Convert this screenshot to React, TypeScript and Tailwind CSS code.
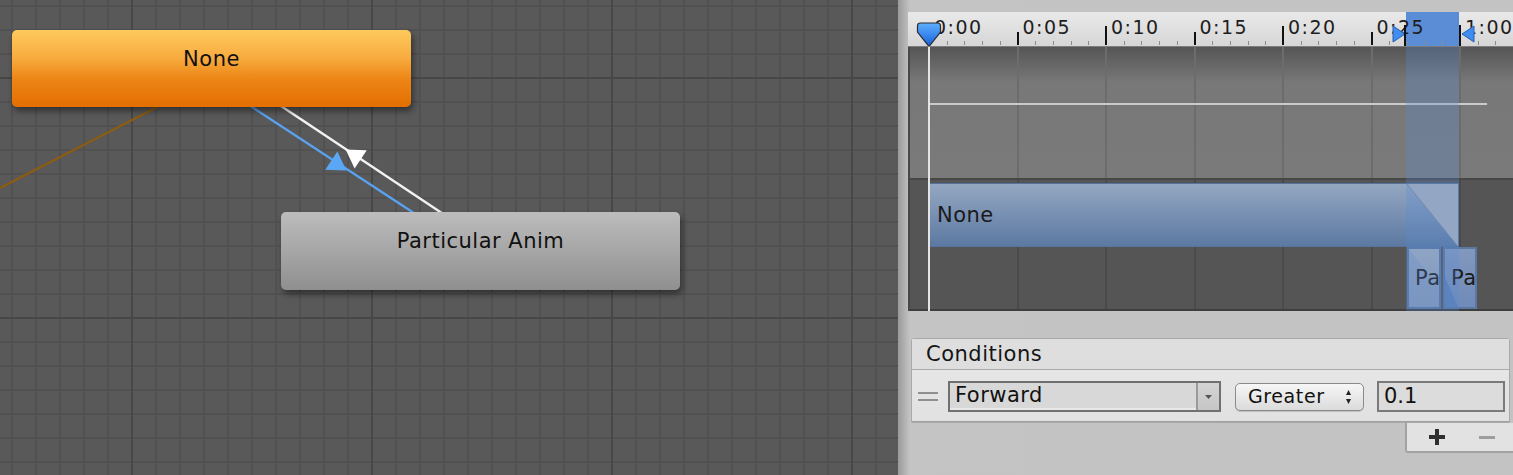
import React from 'react';

const FONT = "font-['DejaVu_Sans',sans-serif]";

// timeline x (relative to the timeline block, which starts at page x 908)
const tx = (t: number) => 21 + 88.5 * t;

const labels = ['0:00', '0:05', '0:10', '0:15', '0:20', '0:25', '1:00'];

const Graph: React.FC = () => (
  <div className="relative w-[898px] h-full shrink-0 overflow-hidden bg-[#595959] [background-image:linear-gradient(to_right,#474747_2px,transparent_2px),linear-gradient(to_bottom,#474747_2px,transparent_2px),linear-gradient(to_right,#515151_2px,transparent_2px),linear-gradient(to_bottom,#515151_2px,transparent_2px)] [background-size:240px_240px,240px_240px,24px_24px,24px_24px] [background-position:131px_77px,131px_77px,11px_5px,11px_5px]">
    {/* transitions */}
    <svg className="absolute inset-0 pointer-events-none" width="898" height="475">
      <line x1="-5" y1="190.6" x2="200" y2="85" stroke="#8c5c12" strokeWidth="2.2" />
      <line x1="230" y1="92.6" x2="420" y2="217" stroke="#5aa2f0" strokeWidth="2.2" />
      <line x1="260" y1="92" x2="450" y2="218.4" stroke="#f2f2f2" strokeWidth="2.4" />
      <polygon points="10,0 -8,-11 -8,11" fill="#5aa8f5" transform="translate(338 165) rotate(33.5)" />
      <polygon points="10,0 -8,-11 -8,11" fill="#ffffff" transform="translate(354 155) rotate(213.5)" />
    </svg>

    {/* state nodes */}
    <div className="absolute left-[12px] top-[30px] w-[399px] h-[77px] rounded-[5px] bg-[linear-gradient(to_bottom,#fec95d,#f8ad40_35%,#ec8414_65%,#e36f00)] shadow-[2px_4px_6px_rgba(0,0,0,0.45)] flex justify-center pt-[17px]">
      <span className={`${FONT} text-[21px] leading-[24px] tracking-[0.5px] text-[#111]`}>None</span>
    </div>
    <div className="absolute left-[281px] top-[212px] w-[399px] h-[78px] rounded-[5px] bg-[linear-gradient(to_bottom,#bcbcbc,#a6a6a6_50%,#8f8f8f)] shadow-[2px_4px_6px_rgba(0,0,0,0.45)] flex justify-center pt-[17px]">
      <span className={`${FONT} text-[21px] leading-[24px] tracking-[0.5px] text-[#111]`}>Particular Anim</span>
    </div>
  </div>
);

const Ruler: React.FC = () => {
  const minors = [];
  for (let i = 0; i < 34; i++) {
    if (i % 5 === 0) continue;
    minors.push(21 + 17.7 * i);
  }
  return (
    <div className="relative h-[35px] overflow-hidden bg-[linear-gradient(to_bottom,#e9e9e9,#d6d6d6)] border-b border-[#7d7d7d]">
      {/* selected transition range */}
      <div className="absolute left-[498px] top-0 w-[53px] h-full bg-[#5b8dd6]" />
      {minors.map((x, i) => (
        <div key={i} className="absolute bottom-[1px] w-px h-[4px] bg-[#8c8c8c]" style={{ left: x }} />
      ))}
      {labels.map((l, t) => (
        <React.Fragment key={l}>
          <div
            className={`absolute bottom-[1px] w-[2px] bg-[#111] ${t % 2 === 1 ? 'h-[13px]' : 'h-[19px]'}`}
            style={{ left: tx(t) - 1 }}
          />
          <span
            className={`${FONT} absolute top-[6px] text-[19px] leading-[19px] tracking-[1.5px] text-[#1e1e1e]`}
            style={{ left: tx(t) + 5 }}
          >
            {l}
          </span>
        </React.Fragment>
      ))}
      {/* range markers */}
      <svg className="absolute left-[484px] top-[13px]" width="16" height="22">
        <polygon points="1,1 13,9 1,17" fill="#3f8df0" stroke="#2a5fae" strokeWidth="1" />
        <rect x="12" y="0" width="2" height="21" fill="#111" />
      </svg>
      <svg className="absolute left-[551px] top-[13px]" width="17" height="22">
        <rect x="0" y="0" width="2" height="21" fill="#111" />
        <polygon points="15,1 3,9 15,17" fill="#3f8df0" stroke="#2a5fae" strokeWidth="1" />
      </svg>
      {/* playhead */}
      <svg className="absolute left-[8px] top-[10px]" width="26" height="26">
        <defs>
          <linearGradient id="ph" x1="0" y1="0" x2="0" y2="1">
            <stop offset="0" stopColor="#5fb0ff" />
            <stop offset="1" stopColor="#145fdc" />
          </linearGradient>
        </defs>
        <path d="M1.5 4 Q1.5 1 4.5 1 L21.5 1 Q24.5 1 24.5 4 L24.5 10 L13 24.5 L1.5 10 Z" fill="url(#ph)" stroke="#2b2b2b" strokeWidth="1.2" />
      </svg>
    </div>
  );
};

const Tracks: React.FC = () => (
  <div className="relative h-[264px] flex flex-col border-l-2 border-[#474747] overflow-hidden">
    {/* curve section */}
    <div className="relative h-[131px] bg-[linear-gradient(to_bottom,#555555,#787878_35px,#7a7a7a)]">
      {[1, 2, 3, 4, 5, 6].map((t) => (
        <div key={t} className="absolute top-0 bottom-0 w-[2px] bg-[#6c6c6c]" style={{ left: tx(t) - 3 }} />
      ))}
      <div className="absolute left-[18px] w-[559px] top-[56px] h-[2px] bg-[#cacaca]" />
    </div>
    <div className="h-[2px] bg-[#474747]" />
    {/* states section */}
    <div className="relative flex-1 bg-[#555555] border-b-2 border-[#3e3e3e]">
      {[1, 2, 3, 4, 5, 6].map((t) => (
        <div key={t} className="absolute top-0 bottom-0 w-[2px] bg-[#4a4a4a]" style={{ left: tx(t) - 3 }} />
      ))}
      <div className="absolute left-[18px] top-[3px] w-[531px] h-[64px] border border-[#55739d] bg-[linear-gradient(to_bottom,#94a7c1,#7890b2_50%,#5c79a1)] flex items-center pl-[8px] overflow-hidden">
        <span className={`${FONT} text-[21px] leading-[24px] tracking-[0.5px] text-[#1a1a1a]`}>None</span>
        <svg className="absolute left-[478px] top-0" width="53" height="64">
          <polygon points="0,0 53,0 53,64 49,60" fill="#a9b1bd" />
          <line x1="0" y1="0" x2="49" y2="60" stroke="#7d8aa0" strokeWidth="1" />
        </svg>
      </div>
      <div className="absolute left-[497px] top-[67px] w-[34px] h-[62px] border-2 border-[#5a78a2] bg-[linear-gradient(to_bottom,#a4aebe,#8d9cb4)] flex items-center pl-[6px] overflow-hidden">
        <svg className="absolute left-0 top-0" width="34" height="60">
          <polygon points="0,0 0,60 34,60 34,44" fill="#7f97bd" opacity="0.5" />
        </svg>
        <span className={`${FONT} relative text-[21px] leading-[24px] tracking-[0.5px] text-[#1a1a1a]`}>Pa</span>
      </div>
      <div className="absolute left-[533px] top-[67px] w-[34px] h-[62px] border-2 border-[#5a78a2] bg-[linear-gradient(to_bottom,#8298bd,#6f8bb9)] flex items-center pl-[6px] overflow-hidden">
        <svg className="absolute left-0 top-0" width="34" height="60">
          <polygon points="0,28 0,60 14,60" fill="#5f80b6" />
        </svg>
        <span className={`${FONT} relative text-[21px] leading-[24px] tracking-[0.5px] text-[#1a1a1a]`}>Pa</span>
      </div>
    </div>
    {/* selected range overlay */}
    <div className="absolute left-[496px] top-0 w-[53px] h-full bg-[rgba(90,140,215,0.28)]" />
    {/* playhead line */}
    <div className="absolute left-[18px] top-0 w-[2px] h-full bg-[#e4e4e4]" />
  </div>
);

const Conditions: React.FC = () => (
  <div className="ml-[13px] mt-[27px] flex flex-col">
    <div className="mr-[3px] rounded-t-[3px] border border-[#a9a9a9] bg-[#e6e6e6]">
      <div className={`${FONT} h-[31px] flex items-center pl-[14px] pt-[2px] bg-[#dedede] border-b border-[#a9a9a9] text-[21px] tracking-[0.5px] text-[#151515]`}>
        Conditions
      </div>
      <div className="h-[52px] flex items-center pt-[2px] border-b border-[#a0a0a0] bg-[linear-gradient(to_bottom,#e6e6e6,#e1e1e1)]">
        <div className="ml-[6px] w-[20px] flex flex-col gap-[5px]">
          <div className="h-[2px] bg-[#8f8f8f]" />
          <div className="h-[2px] bg-[#8f8f8f]" />
        </div>
        <div className="ml-[10px] w-[273px] h-[31px] flex border-2 border-[#707070] bg-[#d8d8d8]">
          <div className={`${FONT} flex-1 flex items-center pl-[5px] pt-[1px] text-[21px] tracking-[0.5px] text-[#111] border-b-2 border-[#e8e8e8]`}>
            Forward
          </div>
          <div className="w-[23px] flex items-center justify-center border-l-2 border-[#9a9a9a] bg-[linear-gradient(to_bottom,#d4d4d4,#c6c6c6)]">
            <svg width="7" height="4">
              <polygon points="0,0 7,0 3.5,4" fill="#555" />
            </svg>
          </div>
        </div>
        <div className="ml-[14px] w-[129px] h-[28px] rounded-[5px] border border-[#8a8a8a] bg-[linear-gradient(to_bottom,#f6f6f6,#dbdbdb)] shadow-[0_1px_0_rgba(0,0,0,0.15)] flex items-center pl-[12px] pr-[12px]">
          <span className={`${FONT} flex-1 text-[19px] tracking-[0.6px] text-[#111]`}>Greater</span>
          <svg width="5" height="14">
            <polygon points="2.5,0 5,5 0,5" fill="#222" />
            <polygon points="0,9 5,9 2.5,14" fill="#222" />
          </svg>
        </div>
        <div className={`${FONT} ml-[13px] w-[128px] h-[31px] border-2 border-[#7a7a7a] bg-[#dcdcdc] flex items-center pl-[5px] pt-[1px] text-[21px] text-[#111]`}>
          0.1
        </div>
      </div>
    </div>
    <div className="self-end w-[108px] h-[30px] rounded-bl-[3px] border-l-2 border-b-2 border-[#a2a2a2] bg-[#e2e2e2] flex items-center">
      <svg className="ml-[22px]" width="16" height="16">
        <rect x="6" y="0" width="4" height="16" fill="#2f2f2f" />
        <rect x="0" y="6" width="16" height="4" fill="#2f2f2f" />
      </svg>
      <div className="ml-[34px] w-[16px] h-[3px] bg-[#9d9d9d]" />
    </div>
  </div>
);

export default function App() {
  return (
    <div className="w-[1513px] h-[475px] flex overflow-hidden bg-[#c3c3c3]">
      <Graph />
      <div className="flex-1 flex flex-col bg-[linear-gradient(to_right,#9a9a9a,#c4c4c4_12px,#c3c3c3)] overflow-hidden">
        <div className="h-[12px]" />
        <div className="pl-[10px]">
          <Ruler />
          <Tracks />
        </div>
        <Conditions />
      </div>
    </div>
  );
}
